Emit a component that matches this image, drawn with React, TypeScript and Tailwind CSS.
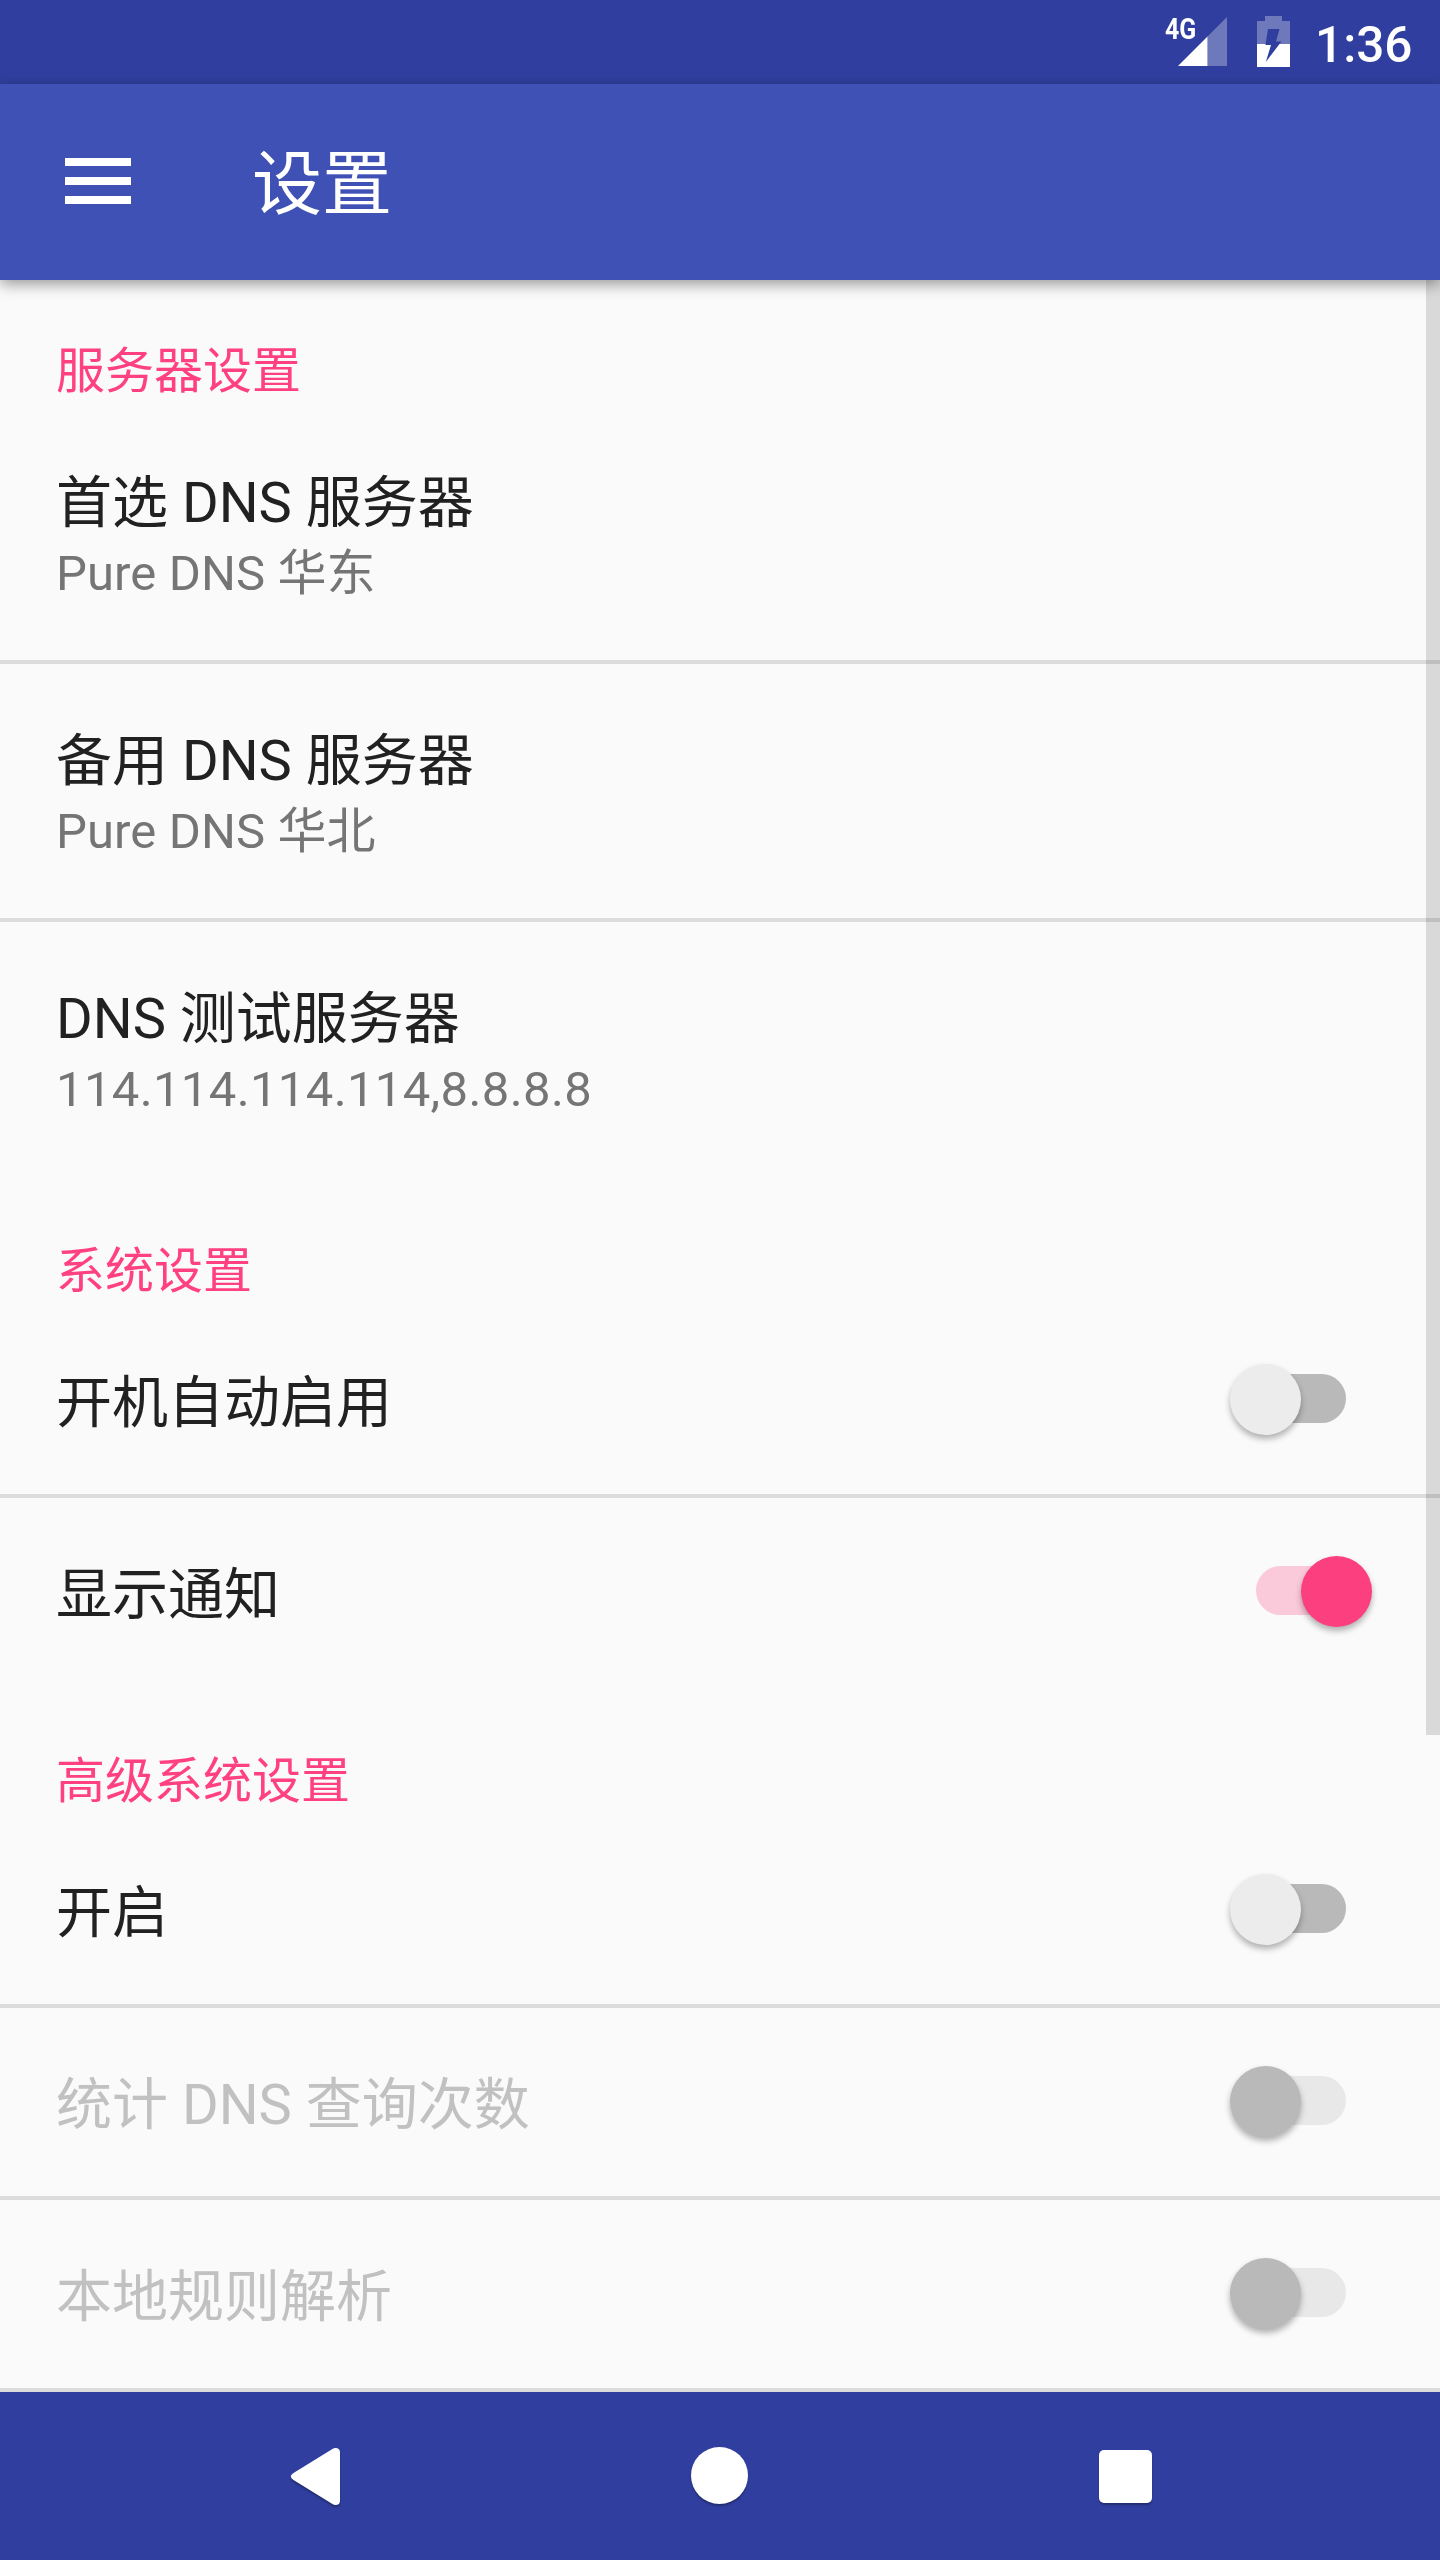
import React from 'react';

interface SettingItem {
    id: string;
    title: string;
    summary?: string;
    checked?: boolean;
    disabled?: boolean;
}

interface SettingSection {
    id: string;
    title: string;
    items: SettingItem[];
}

const sections: SettingSection[] = [
    {
        id: 'server',
        title: '服务器设置',
        items: [
            { id: 'primary', title: '首选 DNS 服务器', summary: 'Pure DNS 华东' },
            { id: 'secondary', title: '备用 DNS 服务器', summary: 'Pure DNS 华北' },
            { id: 'test', title: 'DNS 测试服务器', summary: '114.114.114.114,8.8.8.8' },
        ],
    },
    {
        id: 'system',
        title: '系统设置',
        items: [
            { id: 'boot', title: '开机自动启用', checked: false },
            { id: 'notification', title: '显示通知', checked: true },
        ],
    },
    {
        id: 'advanced',
        title: '高级系统设置',
        items: [
            { id: 'enable', title: '开启', checked: false },
            { id: 'count', title: '统计 DNS 查询次数', checked: false, disabled: true },
            { id: 'rules', title: '本地规则解析', checked: false, disabled: true },
        ],
    },
];

const StatusBar: React.FC = () => (
    <div className="h-[84px] shrink-0 bg-[#303f9f] flex items-start text-white pl-[1165px]">
        <span className="mt-[14px] w-[32px] shrink-0 text-[30px] leading-[30px] font-bold whitespace-nowrap origin-left scale-x-[0.83]">4G</span>
        {/* Signal strength */}
        <svg className="-ml-[19px] mt-[17px] shrink-0" width="49" height="49" viewBox="0 0 49 49">
            <path d="M49 0V49H29.500V19.500z" fill="#fff" fillOpacity="0.3" />
            <path d="M29.500 19.500V49H0z" fill="#fff" />
        </svg>
        {/* Battery, charging */}
        <svg className="ml-[30px] mt-[16px] shrink-0" width="33" height="51" viewBox="0 0 33 51">
            <path fillRule="evenodd" d="M8 0H25V5H33V28H22.500L24.500 25.500H19L22.500 13H11L8.600 28H0V5H8z" fill="#fff" fillOpacity="0.3" />
            <path d="M0 28H8.600L8.500 29H14L8.800 46L22.500 28H33V51H0z" fill="#fff" />
        </svg>
        <span className="ml-[25px] mt-[15px] text-[49.500px] leading-[60px] font-medium">1:36</span>
    </div>
);

const Toolbar: React.FC = () => (
    <header className="relative z-10 h-[196px] shrink-0 bg-[#3f51b5] flex items-center shadow-[0_4px_14px_rgba(0,0,0,0.4)]">
        <button aria-label="menu" className="ml-[65px] mb-[3px] flex flex-col gap-[11px]">
            <span className="block w-[66px] h-2 bg-white" />
            <span className="block w-[66px] h-2 bg-white" />
            <span className="block w-[66px] h-2 bg-white" />
        </button>
        <h1 className="ml-[121px] mt-[6px] text-[70px] leading-[82px] text-white">设置</h1>
    </header>
);

const Switch: React.FC<{ checked: boolean; disabled?: boolean }> = ({ checked, disabled }) => {
    const track = disabled ? 'bg-[#e8e8e8]' : checked ? 'bg-[#fbcada]' : 'bg-[#b9b9b9]';
    const thumb = disabled ? 'bg-[#b9b9b9]' : checked ? 'bg-[#fc3f7e]' : 'bg-[#ececec]';

    return (
        <button role="switch" aria-checked={checked} disabled={disabled} className="relative w-[142px] h-[71px] flex items-center px-[26px]">
            <span className={`block w-[90px] h-[49px] mb-[2px] rounded-full ${track}`} />
            <span
                className={`absolute top-0 size-[71px] rounded-full shadow-[0_4px_6px_rgba(0,0,0,0.3)] ${thumb} ${checked ? 'right-0' : 'left-0'}`}
            />
        </button>
    );
};

const SettingRow: React.FC<{ item: SettingItem; last: boolean }> = ({ item, last }) => (
    <div
        className={`border-b-4 px-14 flex items-center justify-between ${item.summary ? 'h-[258px]' : 'h-[192px]'} ${last ? 'border-transparent' : 'border-[#dcdcdc]'}`}
    >
        <div className="mt-[6px]">
            <div className={`text-[56px] leading-[66px] ${item.disabled ? 'text-[#c1c1c1]' : 'text-[#212121]'}`}>{item.title}</div>
            {item.summary && (
                <div className={`mt-[9px] text-[49px] leading-[58px] text-[#757575] ${/^[\d.,]+$/.test(item.summary) ? 'tracking-[0.36px]' : 'tracking-[0.1px]'}`}>
                    {item.summary}
                </div>
            )}
        </div>
        {item.checked !== undefined && (
            <div className="mr-3 mb-px">
                <Switch checked={item.checked} disabled={item.disabled} />
            </div>
        )}
    </div>
);

const NavigationBar: React.FC = () => (
    <nav className="h-[168px] shrink-0 bg-[#303f9f] flex items-start text-white">
        <svg className="ml-[286px] mt-[50px] drop-shadow-[0_2px_1px_rgba(0,0,0,0.3)]" width="60" height="68" viewBox="0 0 60 68" fill="currentColor">
            <path d="M54 10.500V58.500Q54 63 49.500 63Q48 63 46 61.800L7.500 38Q4.800 36.400 4.800 34.500Q4.800 32.600 7.500 31L46 7.200Q48 6 49.500 6Q54 6 54 10.500z" />
        </svg>
        <span className="block ml-[345px] mt-[55px] size-[57px] rounded-full bg-white shadow-[0_2px_2px_rgba(0,0,0,0.3)]" />
        <span className="block ml-[351px] mt-[58px] size-[53px] rounded-[5px] bg-white shadow-[0_2px_2px_rgba(0,0,0,0.3)]" />
    </nav>
);

const App: React.FC = () => (
    <div className="w-[1440px] h-[2560px] overflow-hidden flex flex-col bg-[#fafafa] font-[Roboto,'Noto_Sans_CJK_SC',sans-serif]">
        <StatusBar />
        <Toolbar />
        <main className="relative flex-1 min-h-0 overflow-hidden">
            {sections.map((section) => (
                <section key={section.id}>
                    <h2 className="h-[126px] px-14 pt-[63px] text-[49px] leading-[58px] text-[#ff4081]">{section.title}</h2>
                    {section.items.map((item, index) => (
                        <SettingRow
                            key={item.id}
                            item={item}
                            last={index === section.items.length - 1 && section.id !== 'advanced'}
                        />
                    ))}
                </section>
            ))}
            <div className="absolute right-0 top-0 w-[14px] h-[1455px] bg-black/13" />
        </main>
        <NavigationBar />
    </div>
);

export default App;
